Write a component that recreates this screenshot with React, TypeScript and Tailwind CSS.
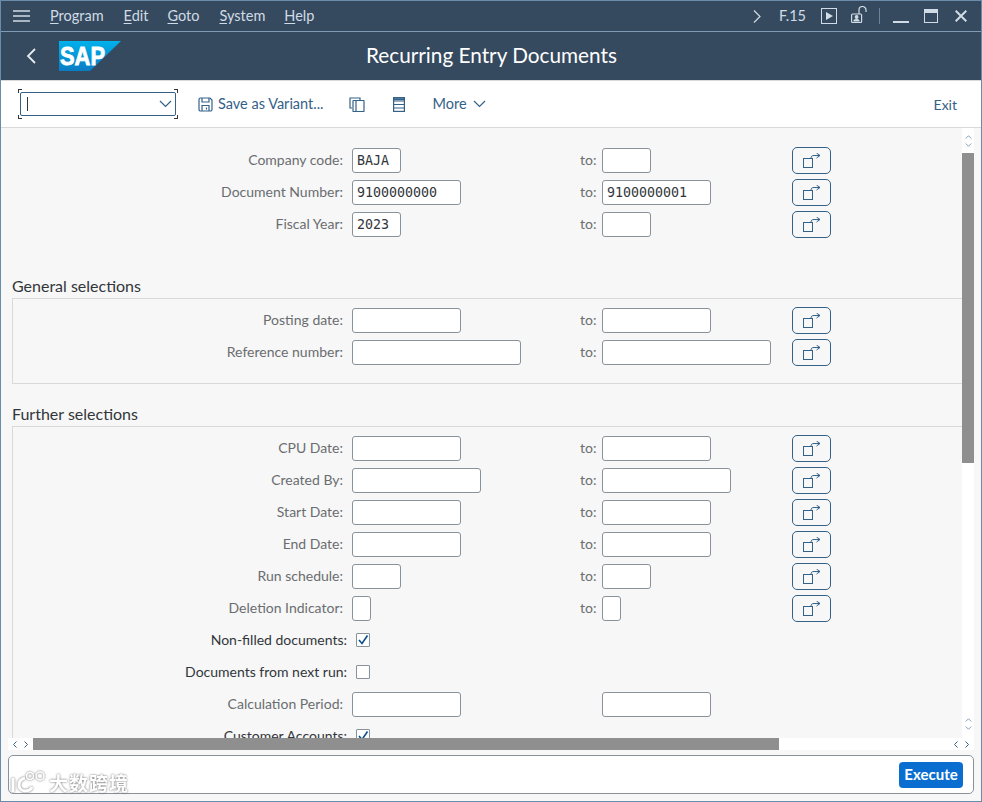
import type { ReactNode } from 'react'

const font = 'font-["Lato","Liberation_Sans",sans-serif]'

// ── Small drawings ────────────────────────────────────────────────────────────
function Chevron({ className, d = 'M1 1l5.5 5.5L12 1' }: { className?: string; d?: string }) {
  return (
    <svg viewBox="0 0 13 8" className={className} fill="none" stroke="currentColor" strokeWidth="1.2">
      <path d={d} />
    </svg>
  )
}

function SapLogo() {
  return (
    <svg width="62" height="30" viewBox="0 0 62 30" className="shrink-0">
      <defs>
        <linearGradient id="sapBlue" x1="0" y1="0" x2="0" y2="1">
          <stop offset="0" stopColor="#00b1eb" />
          <stop offset="1" stopColor="#0a7cc4" />
        </linearGradient>
      </defs>
      <polygon points="0,0 62,0 31,30 0,30" fill="url(#sapBlue)" />
      <text x="1" y="24" fill="#fff" fontFamily="Liberation Sans" fontWeight="700" fontSize="26" textLength="45" lengthAdjust="spacingAndGlyphs" stroke="#fff" strokeWidth="0.8">
        SAP
      </text>
    </svg>
  )
}

function MultiIcon() {
  return (
    <svg width="18" height="15" viewBox="0 0 18 15" fill="none" stroke="#346187" strokeWidth="1">
      <rect x="0.5" y="5.5" width="9" height="9" />
      <path d="M8 5c0-1.500 1-2.500 3-2.500h6M13.500 0l3.500 2.500L13.500 5" />
    </svg>
  )
}

function SaveIcon() {
  return (
    <svg width="15" height="15" viewBox="0 0 15 15" fill="none" stroke="#346187" strokeWidth="1.2">
      <path d="M1 2.500A1.500 1.500 0 0 1 2.500 1h9.500L14 3v9.500a1.500 1.500 0 0 1-1.500 1.500h-10A1.500 1.500 0 0 1 1 12.500z" />
      <path d="M4 1v4h7V1M4 14V8.500h7V14M8.500 10.500v2" />
    </svg>
  )
}

function CopyIcon() {
  return (
    <svg width="16" height="15" viewBox="0 0 16 15" fill="none" stroke="#346187" strokeWidth="1.2">
      <path d="M3 11H1V1h10v2" />
      <rect x="4" y="3.500" width="11" height="11" rx="0.5" />
      <path d="M7 4v10.500" />
    </svg>
  )
}

function TableIcon() {
  return (
    <svg width="12" height="15" viewBox="0 0 12 15" fill="none" stroke="#346187" strokeWidth="1.2">
      <rect x="0.6" y="0.6" width="10.8" height="13.8" />
      <path d="M0.6 4h10.8M0.6 7.500h10.800M0.6 11h10.800" />
      <path d="M0.6 2.200h10.800" strokeWidth="2" />
    </svg>
  )
}

function Watermark() {
  return (
    <div className="pointer-events-none absolute bottom-[8px] left-[9px] flex items-end gap-[3px] [filter:drop-shadow(0_0_1px_#6f6f6f)]">
      <svg width="36" height="22" viewBox="0 0 36 22" fill="none" stroke="#ffffff" strokeWidth="3">
        <path d="M3 7v14" />
        <path d="M15 7C7 9 7 19 15 20c4 0 6-2 7-4" />
        <circle cx="20" cy="5" r="3.500" strokeWidth="1.500" />
        <circle cx="30" cy="5" r="4" strokeWidth="1.500" />
      </svg>
      <span className='text-[19px] leading-[20px] tracking-[1px] font-bold text-white font-["Noto_Sans_CJK_SC",sans-serif]'>
        大数跨境
      </span>
    </div>
  )
}

// ── Form parts ────────────────────────────────────────────────────────────────
function Field({ width, value }: { width: string; value?: string }) {
  return (
    <div
      className={`h-[25px] ${width} shrink-0 rounded-[3px] border border-[#89919a] bg-white pl-[4px] font-["DejaVu_Sans_Mono",monospace] text-[13.300px] leading-[23px] text-[#32363a]`}
    >
      {value}
    </div>
  )
}

function MultiButton() {
  return (
    <button className="flex h-[27px] w-[39px] shrink-0 items-center justify-center rounded-[5px] border border-[#346187] bg-transparent">
      <MultiIcon />
    </button>
  )
}

function RangeRow({ label, w1, w2, from, to }: { label: string; w1: string; w2: string; from?: string; to?: string }) {
  return (
    <div className="flex h-[32px] items-center">
      <span className="w-[330px] shrink-0 pb-[2px] text-right text-[#6a6d70]">{label}</span>
      <div className="ml-[9px] w-[228px] shrink-0">
        <Field width={w1} value={from} />
      </div>
      <span className="w-[16px] shrink-0 pb-[2px] text-right text-[#6a6d70]">to:</span>
      <div className="ml-[6px] w-[190px] shrink-0">
        <Field width={w2} value={to} />
      </div>
      <MultiButton />
    </div>
  )
}

function CheckRow({ label, checked }: { label: string; checked?: boolean }) {
  return (
    <div className="flex h-[32px] items-center">
      <span className="w-[334px] shrink-0 pb-[2px] text-right text-[#32363a]">{label}</span>
      <div className="ml-[9px] flex h-[14px] w-[14px] items-center justify-center rounded-[1px] border border-[#89919a] bg-white">
        {checked && (
          <svg width="12" height="12" viewBox="0 0 12 12" fill="none" stroke="#0a4f8a" strokeWidth="1.6">
            <path d="M2 6l3 3.500L10.500 1.500" />
          </svg>
        )}
      </div>
    </div>
  )
}

function Group({ title, children, boxed = true, className = '' }: { title?: string; children: ReactNode; boxed?: boolean; className?: string }) {
  return (
    <section>
      {title && <h2 className="text-[16px] leading-[24px] text-[#32363a]">{title}</h2>}
      <div className={`w-[960px] border ${boxed ? 'border-[#d9d9d9]' : 'border-transparent'} ${className}`}>{children}</div>
    </section>
  )
}

function VScroll() {
  return (
    <div className="flex w-[12px] shrink-0 flex-col bg-white">
      <div className="flex h-[25px] flex-col items-center justify-center gap-[4px] text-[#346187]">
        <Chevron className="h-[4px] w-[7px]" d="M1 7l5.500-5.500L12 7" />
        <Chevron className="h-[4px] w-[7px]" />
      </div>
      <div className="h-[310px] bg-[#8f8f8f]" />
      <div className="flex-1" />
      <div className="mb-[2px] flex h-[25px] flex-col items-center justify-center gap-[4px] text-[#346187]">
        <Chevron className="h-[4px] w-[7px]" d="M1 7l5.500-5.500L12 7" />
        <Chevron className="h-[4px] w-[7px]" />
      </div>
    </div>
  )
}

function HChevrons() {
  return (
    <div className="flex w-[25px] shrink-0 items-center justify-center gap-[7px] text-[#346187]">
      <svg width="4" height="7" viewBox="0 0 4 7" fill="none" stroke="currentColor"><path d="M3.500.5l-3 3 3 3" /></svg>
      <svg width="4" height="7" viewBox="0 0 4 7" fill="none" stroke="currentColor"><path d="M.5.5l3 3-3 3" /></svg>
    </div>
  )
}

const menu = ['Program', 'Edit', 'Goto', 'System', 'Help']
const menuGap = ['ml-[20px]', 'ml-[20px]', 'ml-[19px]', 'ml-[20px]', 'ml-[19px]']

export default function App() {
  return (
    <div className={`relative flex h-[802px] w-[982px] flex-col overflow-hidden border border-[#6b8bab] bg-[#f7f7f7] text-[14px] ${font}`}>
      {/* ── Title bar ── */}
      <header className="flex h-[31px] shrink-0 items-center border-b border-[#7f9bb5] bg-[#354a5f] pl-[12px] text-[14.500px] text-[#d1dbe5]">
        <svg width="17" height="12" viewBox="0 0 17 12" stroke="currentColor" strokeWidth="1.6">
          <path d="M0 1h17M0 6h17M0 11h17" />
        </svg>
        {menu.map((m, i) => (
          <span key={m} className={menuGap[i]}>
            <span className="underline underline-offset-2">{m[0]}</span>
            {m.slice(1)}
          </span>
        ))}
        <div className="flex-1" />
        <svg width="8" height="13" viewBox="0 0 8 13" fill="none" stroke="currentColor" strokeWidth="1.2">
          <path d="M1 .5l6 6-6 6" />
        </svg>
        <span className="ml-[18px]">F.15</span>
        <svg className="ml-[15px]" width="16" height="16" viewBox="0 0 16 16" fill="none" stroke="currentColor">
          <rect x="0.5" y="0.5" width="15" height="15" />
          <path d="M5 4l7 4-7 4z" fill="currentColor" stroke="none" />
        </svg>
        <svg className="mb-[3px] ml-[14px]" width="16" height="17" viewBox="0 0 16 17" fill="none" stroke="currentColor" strokeWidth="1.2">
          <rect x="0.6" y="8" width="10" height="8.500" rx="1" />
          <path d="M8 8V4a3.500 3.500 0 0 1 7 0v2" />
          <circle cx="5.600" cy="11" r="1.300" fill="currentColor" />
          <path d="M3 15c0-2 5-2 5 0z" fill="currentColor" />
        </svg>
        <div className="ml-[12px] h-[16px] w-px bg-[#6f8296]" />
        <div className="ml-[13px] mt-[12px] h-[2px] w-[16px] bg-current" />
        <div className="ml-[15px] h-[14px] w-[14px] border border-t-[4px] border-current" />
        <svg className="ml-[17px] mr-[14px]" width="12" height="12" viewBox="0 0 12 12" stroke="currentColor" strokeWidth="2">
          <path d="M.7.7l10.600 10.600M11.300.7L.7 11.300" />
        </svg>
      </header>

      {/* ── Page header ── */}
      <div className="relative flex h-[49px] shrink-0 items-center border-b border-[#d9d9d9] bg-[#354a5f] pl-[25px]">
        <svg width="10" height="16" viewBox="0 0 10 16" fill="none" stroke="#e5ebf0" strokeWidth="1.8">
          <path d="M9 1L2 8l7 7" />
        </svg>
        <div className="ml-[23px]">
          <SapLogo />
        </div>
        <h1 className="absolute left-[365px] text-[20.750px] text-white">Recurring Entry Documents</h1>
      </div>

      {/* ── Toolbar ── */}
      <div className="flex h-[47px] shrink-0 items-center border-b border-[#d9d9d9] bg-white pr-[24px] text-[14.500px] text-[#346187]">
        <div className="relative ml-[19px] flex h-[24px] w-[156px] shrink-0 items-center justify-between rounded-[2px] border border-[#346187] bg-white pl-[6px] pr-[3px]">
          <div className="h-[14px] w-px bg-[#32363a]" />
          <Chevron className="h-[8px] w-[13px]" />
          <span className="absolute -left-[3px] -top-[4px] h-[4px] w-[4px] border-l border-t border-[#32363a]" />
          <span className="absolute -right-[3px] -top-[4px] h-[4px] w-[4px] border-r border-t border-[#32363a]" />
          <span className="absolute -bottom-[4px] -left-[3px] h-[4px] w-[4px] border-b border-l border-[#32363a]" />
          <span className="absolute -bottom-[4px] -right-[3px] h-[4px] w-[4px] border-b border-r border-[#32363a]" />
        </div>
        <div className="ml-[22px]"><SaveIcon /></div>
        <span className="ml-[5px]">Save as Variant...</span>
        <div className="ml-[25px]"><CopyIcon /></div>
        <div className="ml-[28px]"><TableIcon /></div>
        <span className="ml-[28px]">More</span>
        <Chevron className="ml-[6px] h-[8px] w-[13px]" />
        <span className="ml-auto text-[14px]">Exit</span>
      </div>

      {/* ── Selection screen ── */}
      <div className="flex min-h-0 flex-1">
        <main className="w-[961px] shrink-0 overflow-hidden pl-[11px] pt-[15px]">
          <Group boxed={false}>
            <RangeRow label="Company code:" w1="w-[49px]" w2="w-[49px]" from="BAJA" />
            <RangeRow label="Document Number:" w1="w-[109px]" w2="w-[109px]" from="9100000000" to="9100000001" />
            <RangeRow label="Fiscal Year:" w1="w-[49px]" w2="w-[49px]" from="2023" />
          </Group>
          <div className="mt-[33px]">
            <Group title="General selections" className="pb-[15px] pt-[5px]">
              <RangeRow label="Posting date:" w1="w-[109px]" w2="w-[109px]" />
              <RangeRow label="Reference number:" w1="w-[169px]" w2="w-[169px]" />
            </Group>
          </div>
          <div className="mt-[18px]">
            <Group title="Further selections" className="pb-[60px] pt-[5px]">
              <RangeRow label="CPU Date:" w1="w-[109px]" w2="w-[109px]" />
              <RangeRow label="Created By:" w1="w-[129px]" w2="w-[129px]" />
              <RangeRow label="Start Date:" w1="w-[109px]" w2="w-[109px]" />
              <RangeRow label="End Date:" w1="w-[109px]" w2="w-[109px]" />
              <RangeRow label="Run schedule:" w1="w-[49px]" w2="w-[49px]" />
              <RangeRow label="Deletion Indicator:" w1="w-[19px]" w2="w-[19px]" />
              <CheckRow label="Non-filled documents:" checked />
              <CheckRow label="Documents from next run:" />
              <div className="flex h-[32px] items-center">
                <span className="w-[330px] shrink-0 pb-[2px] text-right text-[#6a6d70]">Calculation Period:</span>
                <div className="ml-[9px] w-[250px] shrink-0">
                  <Field width="w-[109px]" />
                </div>
                <Field width="w-[109px]" />
              </div>
              <CheckRow label="Customer Accounts:" checked />
            </Group>
          </div>
        </main>
        <VScroll />
      </div>

      {/* ── Horizontal scrollbar ── */}
      <div className="ml-[7px] flex h-[12px] w-[966px] shrink-0 bg-white">
        <HChevrons />
        <div className="w-[746px] bg-[#8f8f8f]" />
        <div className="flex-1" />
        <HChevrons />
      </div>

      {/* ── Footer ── */}
      <footer className="relative shrink-0 px-[7px] pb-[7px] pt-[5px]">
        <div className="flex h-[39px] w-[966px] items-center justify-end rounded-[5px] border border-[#89919a] bg-white pr-[10px]">
          <button className="h-[26px] w-[64px] rounded-[4px] bg-[#0a6ed1] pb-px text-[15px] font-bold text-white">Execute</button>
        </div>
        <Watermark />
      </footer>
    </div>
  )
}
